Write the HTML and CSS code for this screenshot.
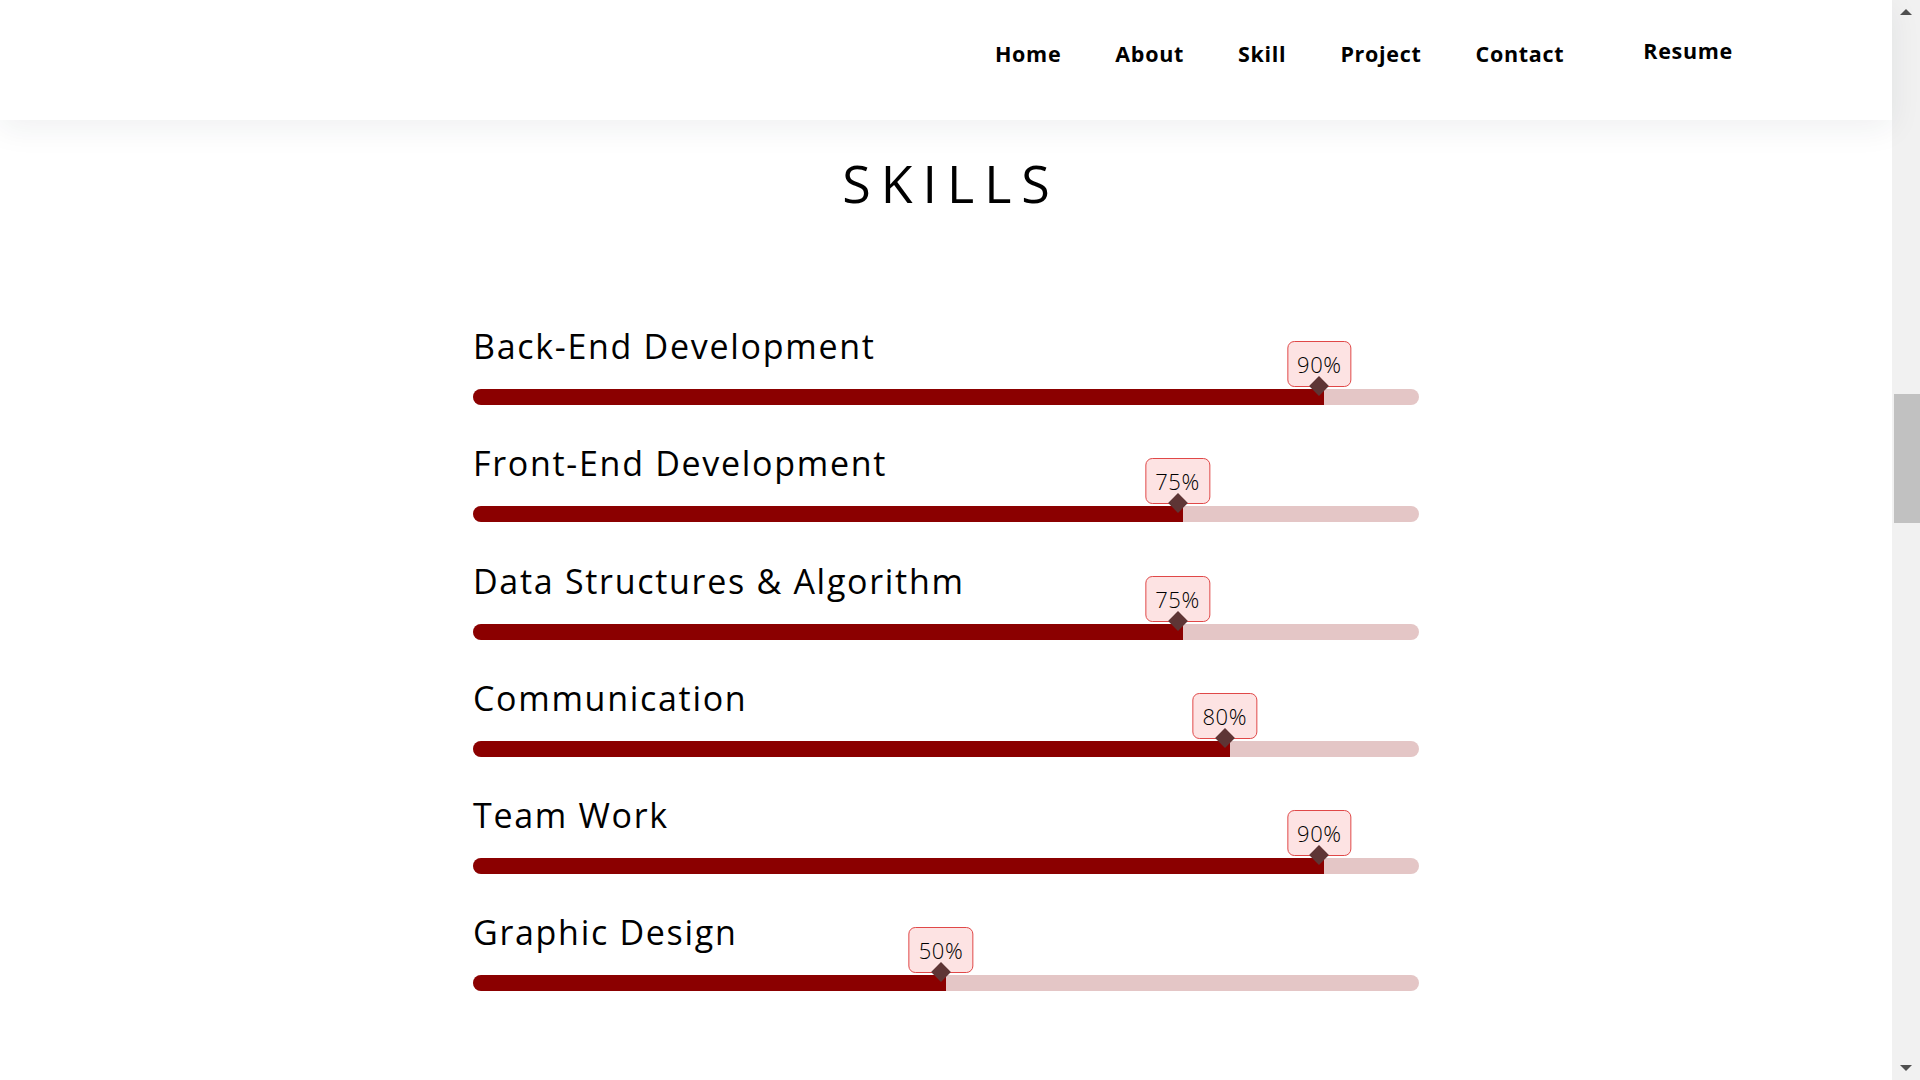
FILE: index.html
```html
<!DOCTYPE html>
<html lang="en">
<head>
<meta charset="utf-8">
<title>Skills</title>
<link rel="stylesheet" href="styles.css">
</head>
<body>
<div class="page">
  <header class="header">
    <nav class="nav">
      <a class="nav-link" href="#">Home</a>
      <a class="nav-link" href="#">About</a>
      <a class="nav-link" href="#">Skill</a>
      <a class="nav-link" href="#">Project</a>
      <a class="nav-link" href="#">Contact</a>
      <a class="nav-link resume" href="#">Resume</a>
    </nav>
  </header>
  <main class="main">
    <h1 class="title">SKILLS</h1>
    <div class="skills">
      <div class="skill">
        <div class="skill-name">Back-End Development</div>
        <div class="track"><div class="fill" style="width:90%"><span class="tip">90%</span><span class="knob"></span></div></div>
      </div>
      <div class="skill">
        <div class="skill-name">Front-End Development</div>
        <div class="track"><div class="fill" style="width:75%"><span class="tip">75%</span><span class="knob"></span></div></div>
      </div>
      <div class="skill">
        <div class="skill-name">Data Structures &amp; Algorithm</div>
        <div class="track"><div class="fill" style="width:75%"><span class="tip">75%</span><span class="knob"></span></div></div>
      </div>
      <div class="skill">
        <div class="skill-name">Communication</div>
        <div class="track"><div class="fill" style="width:80%"><span class="tip">80%</span><span class="knob"></span></div></div>
      </div>
      <div class="skill">
        <div class="skill-name">Team Work</div>
        <div class="track"><div class="fill" style="width:90%"><span class="tip">90%</span><span class="knob"></span></div></div>
      </div>
      <div class="skill">
        <div class="skill-name">Graphic Design</div>
        <div class="track"><div class="fill" style="width:50%"><span class="tip">50%</span><span class="knob"></span></div></div>
      </div>
    </div>
  </main>
</div>
<div class="scrollbar">
  <div class="arrow arrow-up"></div>
  <div class="sb-track"><div class="thumb"></div></div>
  <div class="arrow arrow-down"></div>
</div>
</body>
</html>
```

FILE: styles.css
```css
* { box-sizing: border-box; }
html, body { height: 100%; }
body {
  margin: 0;
  display: flex;
  overflow: hidden;
  background: #fff;
  font-family: "Open Sans", "Liberation Sans", sans-serif;
  color: #000;
}
.page {
  flex: 1;
  display: flex;
  flex-direction: column;
  min-width: 0;
}
.header {
  height: 120px;
  flex: none;
  display: flex;
  justify-content: flex-end;
  align-items: center;
  padding-right: 159px;
  background: #fff;
  box-shadow: 0 8px 30px rgba(30, 40, 60, 0.07);
  position: relative;
  z-index: 2;
}
.nav {
  display: flex;
  align-items: center;
  gap: 54px;
  padding-bottom: 14px;
}
.nav-link {
  font-size: 21.5px;
  font-weight: 700;
  color: #000;
  text-decoration: none;
  letter-spacing: 0.7px;
}
.resume {
  margin-left: 25px;
  margin-bottom: 6px;
}
.main {
  flex: 1;
  display: flex;
  flex-direction: column;
  align-items: center;
}
.title {
  margin: 37px 0 0 0;
  font-size: 52px;
  line-height: 52px;
  font-weight: 400;
  letter-spacing: 10px;
  padding-left: 10px;
  color: #000;
}
.skills {
  width: 50%;
  margin-top: 117px;
  display: flex;
  flex-direction: column;
}
.skill {
  margin-bottom: 38.3px;
}
.skill-name {
  font-size: 34px;
  line-height: 40px;
  font-weight: 400;
  letter-spacing: 1.7px;
  color: #000;
}
.track {
  margin-top: 23px;
  height: 16px;
  border-radius: 8px;
  background: #e4c6c6;
  position: relative;
}
.fill {
  height: 100%;
  background: #8b0000;
  border-radius: 8px 0 0 8px;
  position: relative;
}
.knob {
  position: absolute;
  right: -2px;
  top: -10px;
  width: 14px;
  height: 14px;
  background: #5e3535;
  transform: rotate(45deg);
  z-index: 2;
}
.tip {
  position: absolute;
  right: 5px;
  bottom: 18px;
  transform: translateX(50%);
  height: 46px;
  padding: 0 9px;
  display: flex;
  align-items: center;
  background: #fde3e3;
  border: 1.5px solid #e04848;
  border-radius: 7px;
  font-size: 22px;
  font-weight: 300;
  letter-spacing: 0.6px;
  color: #000;
  white-space: nowrap;
  z-index: 1;
}
.scrollbar {
  width: 28px;
  flex: none;
  background: #f1f1f1;
  display: flex;
  flex-direction: column;
  align-items: center;
}
.arrow {
  width: 0;
  height: 0;
  flex: none;
  border-left: 6px solid transparent;
  border-right: 6px solid transparent;
}
.arrow-up {
  margin-top: 9px;
  border-bottom: 6px solid #505050;
}
.arrow-down {
  margin-bottom: 9px;
  border-top: 6px solid #505050;
}
.sb-track {
  flex: 1;
  width: 100%;
  display: flex;
  flex-direction: column;
  align-items: flex-end;
}
.thumb {
  margin-top: 379px;
  width: 26px;
  height: 129px;
  background: #c1c1c1;
}
```
